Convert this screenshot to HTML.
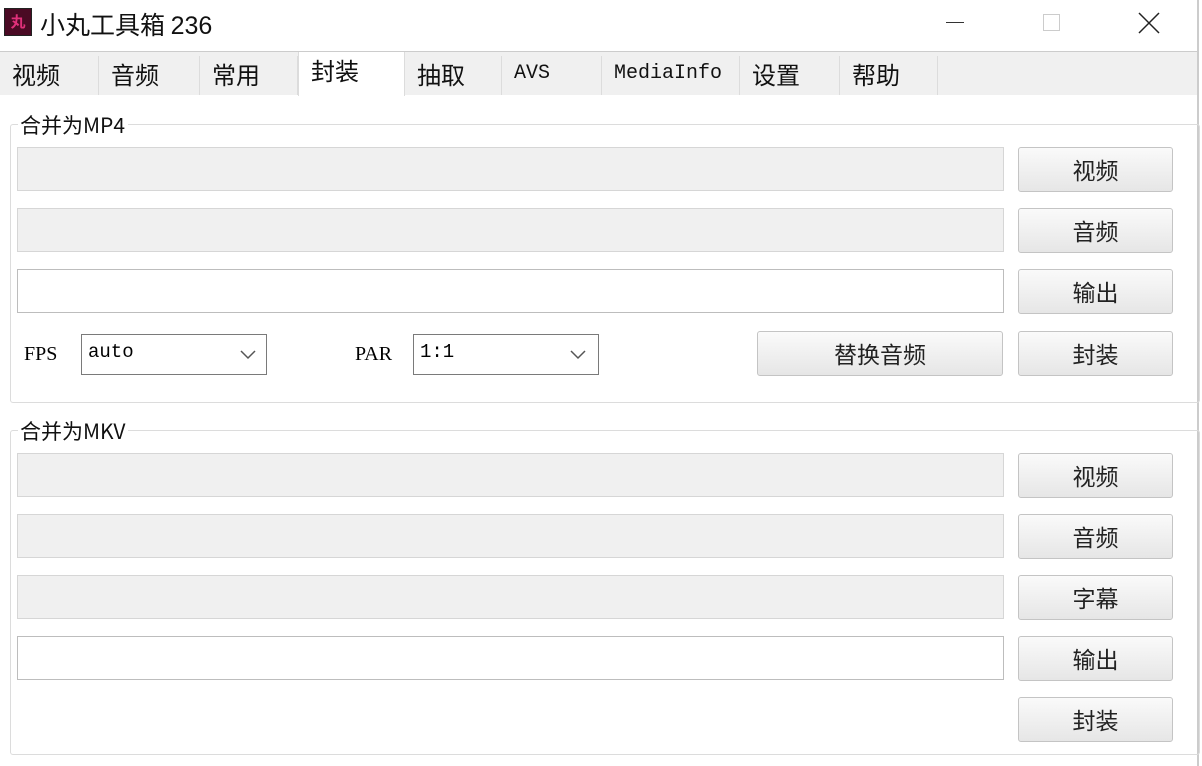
<!DOCTYPE html>
<html><head><meta charset="utf-8"><style>
body{margin:0;width:1202px;height:766px;background:#fff;position:relative;overflow:hidden;font-family:"Liberation Sans","Noto Sans CJK SC",sans-serif;}
.a{position:absolute;box-sizing:border-box;}
.tab{position:absolute;top:56px;height:39px;background:#f0f0f0;border-right:1px solid #dcdcdc;font-size:24px;color:#111;padding:0 0 0 12px;box-sizing:border-box;font-family:"Noto Sans CJK SC",sans-serif;}
.tab.m{font-family:"Liberation Mono",monospace;font-size:20px;padding-top:6px;}
.f{position:absolute;left:17px;width:987px;height:44px;border:1px solid #d6d6d6;background:#f0f0f0;box-sizing:border-box;}
.f.w{background:#fff;border-color:#bdbdbd;}
.b{position:absolute;left:1018px;width:155px;height:45px;border:1px solid #c4c4c4;border-radius:3px;background:linear-gradient(#fafafa,#e6e6e6);text-align:center;line-height:43px;font-size:23px;color:#222;font-family:"Noto Sans CJK SC",sans-serif;box-sizing:border-box;}
.g{position:absolute;left:10px;width:1188px;border:1px solid #dcdcdc;border-radius:3px;}
.gl{position:absolute;left:18px;background:#fff;font-size:21px;padding:0 3px 0 2px;font-family:"Noto Sans CJK SC",sans-serif;color:#111;}
.cb{position:absolute;top:334px;height:41px;border:1px solid #7a7a7a;background:#fff;font-family:"Liberation Mono",monospace;font-size:19px;padding:6px 0 0 6px;box-sizing:border-box;}
.lb{position:absolute;top:343px;font-family:"Liberation Serif",serif;font-size:20px;}
</style></head><body>
<div class="a" style="left:0;top:0;width:1197px;height:52px;background:#fff;"></div>
<div class="a" style="left:4px;top:8px;width:28px;height:28px;background:#4a0a24;border:1px solid #222;color:#e0307a;font-size:15px;text-align:center;line-height:26px;font-family:'Noto Sans CJK SC',sans-serif;font-weight:bold;">丸</div>
<div class="a" style="left:40px;top:6px;font-size:25px;color:#111;font-family:'Noto Sans CJK SC',sans-serif;">小丸工具箱 <span style="font-family:'Liberation Sans'">236</span></div>
<div class="a" style="left:946px;top:22px;width:18px;height:1px;background:#333;"></div>
<div class="a" style="left:1043px;top:14px;width:17px;height:17px;border:1px solid #ccc;"></div>
<svg class="a" style="left:1138px;top:12px" width="22" height="22"><path d="M1 1L21 21M21 1L1 21" stroke="#222" stroke-width="1.5"/></svg>
<div class="a" style="left:0;top:51px;width:1197px;height:1px;background:#ccc;"></div>
<div class="a" style="left:0;top:52px;width:1197px;height:43px;background:#f0f0f0;"></div>
<div class="a" style="left:1197px;top:0;width:2px;height:766px;background:#ccc;"></div>
<div class="tab" style="left:0;width:99px;">视频</div>
<div class="tab" style="left:99px;width:101px;">音频</div>
<div class="tab" style="left:200px;width:98px;">常用</div>
<div class="tab" style="left:298px;top:52px;height:44px;width:107px;background:#fff;border-left:1px solid #dcdcdc;padding-top:0;">封装</div>
<div class="tab" style="left:405px;width:97px;">抽取</div>
<div class="tab m" style="left:502px;width:100px;">AVS</div>
<div class="tab m" style="left:602px;width:138px;">MediaInfo</div>
<div class="tab" style="left:740px;width:100px;">设置</div>
<div class="tab" style="left:840px;width:98px;">帮助</div>

<div class="g" style="top:124px;height:277px;"></div>
<div class="gl" style="top:110px;">合并为MP4</div>
<div class="f" style="top:147px"></div><div class="b" style="top:147px">视频</div>
<div class="f" style="top:208px"></div><div class="b" style="top:208px">音频</div>
<div class="f w" style="top:269px"></div><div class="b" style="top:269px">输出</div>
<div class="lb" style="left:24px;">FPS</div>
<div class="cb" style="left:81px;width:186px;">auto</div>
<svg class="a" style="left:240px;top:350px" width="16" height="10"><path d="M1 1L8 8L15 1" fill="none" stroke="#555" stroke-width="1.5"/></svg>
<div class="lb" style="left:355px;">PAR</div>
<div class="cb" style="left:413px;width:186px;">1:1</div>
<svg class="a" style="left:570px;top:350px" width="16" height="10"><path d="M1 1L8 8L15 1" fill="none" stroke="#555" stroke-width="1.5"/></svg>
<div class="b" style="top:331px;left:757px;width:246px;">替换音频</div>
<div class="b" style="top:331px">封装</div>

<div class="g" style="top:430px;height:323px;"></div>
<div class="gl" style="top:416px;">合并为MKV</div>
<div class="f" style="top:453px"></div><div class="b" style="top:453px">视频</div>
<div class="f" style="top:514px"></div><div class="b" style="top:514px">音频</div>
<div class="f" style="top:575px"></div><div class="b" style="top:575px">字幕</div>
<div class="f w" style="top:636px"></div><div class="b" style="top:636px">输出</div>
<div class="b" style="top:697px">封装</div>
</body></html>
